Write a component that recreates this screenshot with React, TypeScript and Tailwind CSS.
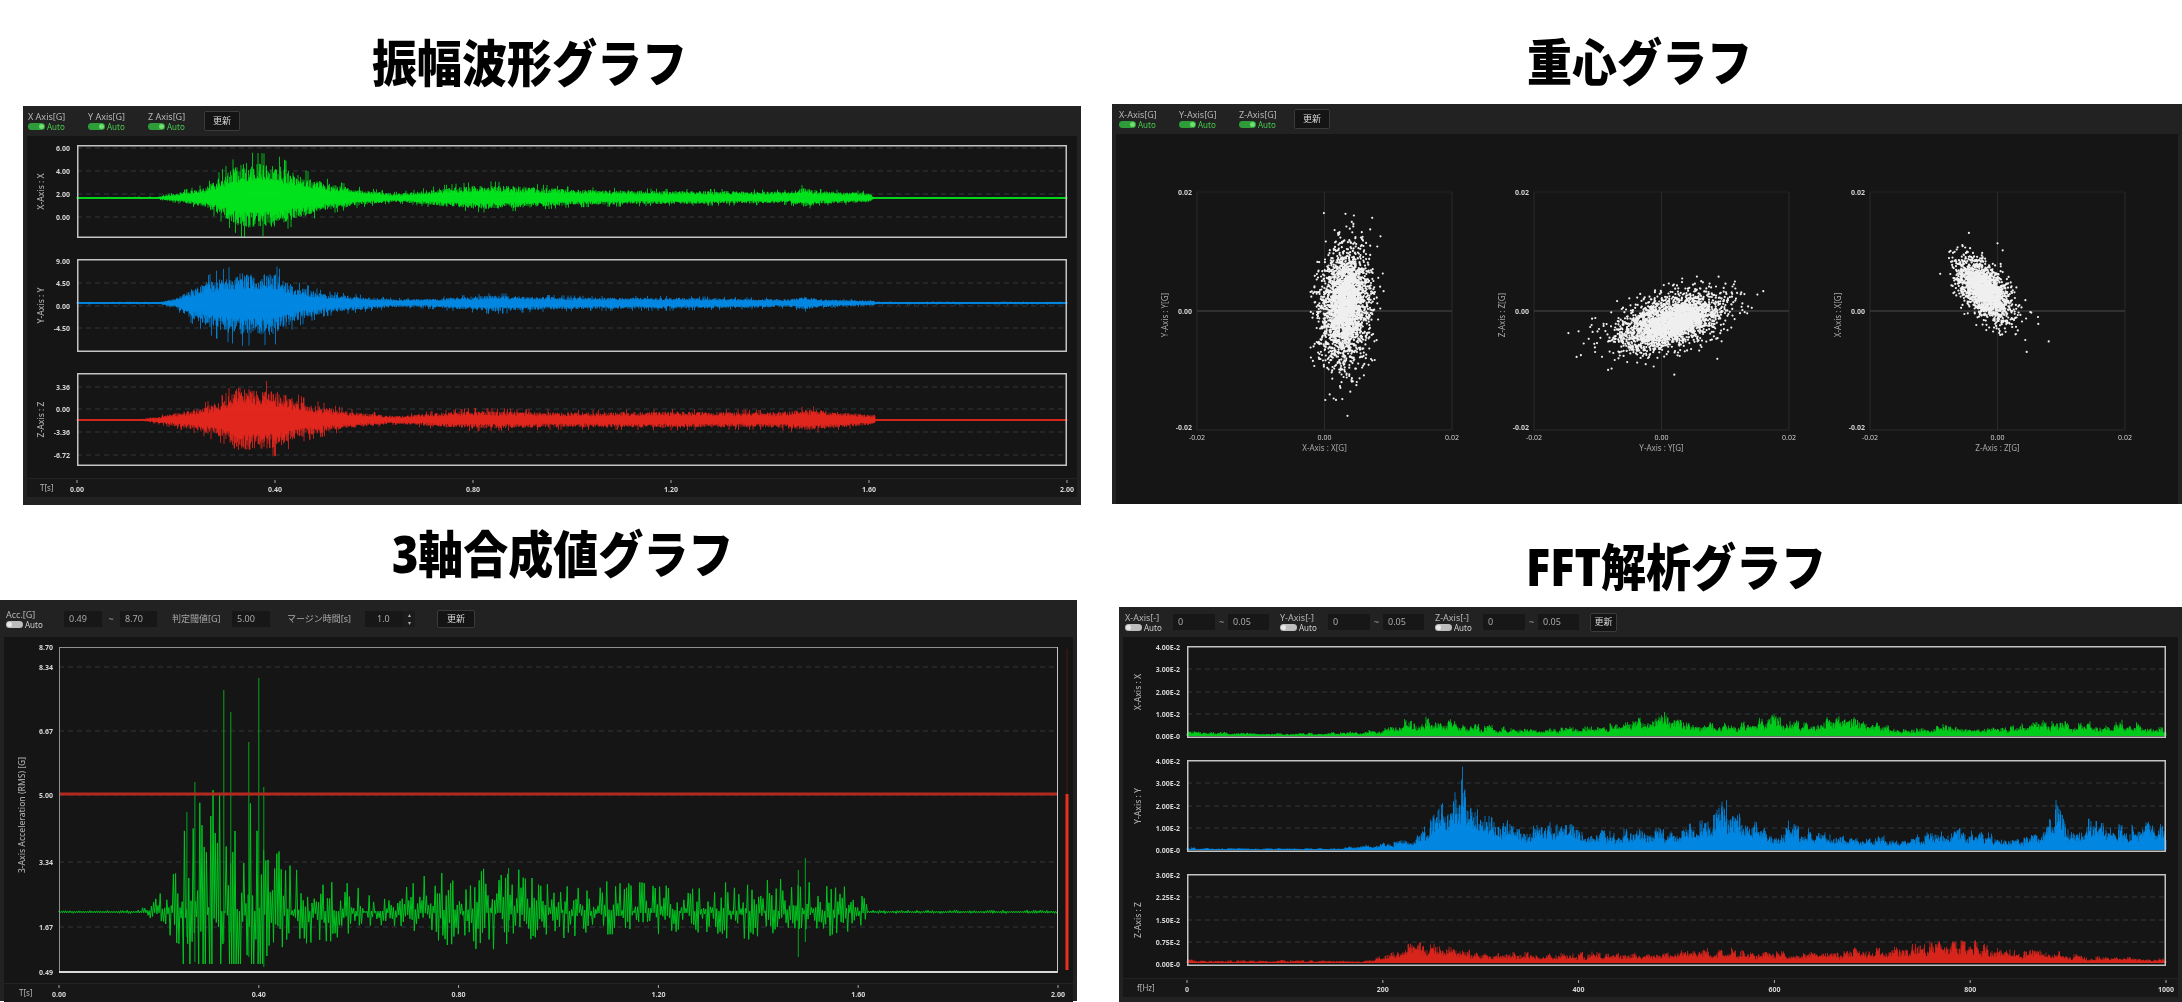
import { useMemo } from 'react';

type Kp = [number, number];
type Tick = { label: string; y: number; grid?: boolean };

const mulberry = (seed: number) => () => {
  seed = (seed + 0x6d2b79f5) | 0;
  let t = Math.imul(seed ^ (seed >>> 15), 1 | seed);
  t = (t + Math.imul(t ^ (t >>> 7), 61 | t)) ^ t;
  return ((t ^ (t >>> 14)) >>> 0) / 4294967296;
};

const env = (kps: Kp[], f: number) => {
  for (let i = 1; i < kps.length; i++) {
    if (f <= kps[i][0]) {
      const [x0, y0] = kps[i - 1];
      const [x1, y1] = kps[i];
      return y0 + ((y1 - y0) * (f - x0)) / (x1 - x0);
    }
  }
  return kps[kps.length - 1][1];
};

// symmetric vibration waveform, one short vertical stroke per half pixel
const waveBars = (seed: number, kps: Kp[], w: number, cy: number, down: number) => {
  const r = mulberry(seed);
  let d = '';
  for (let x = 0; x <= w; x += 0.5) {
    const a = env(kps, x / w);
    const k = () => (r() > 0.95 ? 1 : 0.35 + 0.42 * r());
    const up = Math.max(a * k(), 0.9);
    const dn = Math.max(a * k() * down, 0.9);
    d += `M${x.toFixed(1)} ${(cy - up).toFixed(1)}V${(cy + dn).toFixed(1)}`;
  }
  return d;
};

// fft spectrum, bars growing from the baseline
const fftBars = (seed: number, kps: Kp[], w: number, base: number) => {
  const r = mulberry(seed);
  let d = '';
  let m = 1;
  for (let x = 0, i = 0; x <= w; x += 0.5, i++) {
    if (i % 9 === 0) m = 0.5 + 0.5 * r();
    const a = env(kps, x / w);
    const h = a * m * (r() > 0.9 ? 1 : 0.45 + 0.5 * r());
    d += `M${x.toFixed(1)} ${base}V${(base - h).toFixed(1)}`;
  }
  return d;
};

const rmsLine = (seed: number, kps: Kp[], w: number, cy: number) => {
  const r = mulberry(seed);
  let d = `M0 ${cy}`;
  let s = 1;
  for (let x = 0; x <= w; x += 1.1) {
    const a = env(kps, x / w);
    const v = s > 0 ? a * Math.pow(r(), 1.5) : Math.min(a * 0.85 * Math.pow(r(), 1.5), 52);
    d += `L${x.toFixed(1)} ${(cy - s * Math.max(v, 0.8)).toFixed(1)}`;
    s = -s;
  }
  return d;
};

const scatter = (seed: number, n: number, cx: number, cy: number, sx: number, sy: number, rho: number) => {
  const r = mulberry(seed);
  const g = () => Math.sqrt(-2 * Math.log(r() + 1e-6)) * Math.cos(6.2832 * r());
  let d = '';
  for (let i = 0; i < n; i++) {
    const tail = r() < 0.12 ? 1.4 : 1;
    const a = g() * tail;
    const b = g() * tail;
    const x = cx + sx * a;
    const y = cy + sy * (rho * a + Math.sqrt(1 - rho * rho) * b);
    if (y < 8 || y > 230) continue;
    d += `M${x.toFixed(1)} ${y.toFixed(1)}h0`;
  }
  return d;
};

const Toggle = ({ on }: { on?: boolean }) => (
  <span className={`relative inline-block w-[17px] h-[7px] rounded-full ${on ? 'bg-[#2f9c3a]' : 'bg-[#bdbdbd]'}`}>
    <span className={`absolute top-[1px] w-[5px] h-[5px] rounded-full ${on ? 'right-[1px] bg-[#6fe06f]' : 'left-[1px] bg-[#e8e8e8]'}`} />
  </span>
);

const AxisGroup = ({ label, on, className }: { label: string; on?: boolean; className?: string }) => (
  <div className={`flex flex-col shrink-0 ${className ?? ''}`}>
    <span className="text-[9px] leading-[11px] text-[#b5b5b5] whitespace-nowrap">{label}</span>
    <div className="flex items-center gap-[2px]">
      <Toggle on={on} />
      <span className={`text-[8px] leading-[9px] ${on ? 'text-[#47c94c]' : 'text-[#cfcfcf]'}`}>Auto</span>
    </div>
  </div>
);

const Field = ({ value, className }: { value: string; className?: string }) => (
  <div className={`h-[16px] bg-[#171717] text-[9px] leading-[16px] text-[#a8a8a8] pl-[5px] shrink-0 ${className ?? ''}`}>{value}</div>
);

const UpdateButton = ({ className }: { className?: string }) => (
  <button className={`bg-[#141414] border border-[#3a3a3a] rounded-[2px] text-[9px] text-[#dcdcdc] shrink-0 ${className ?? ''}`}>更新</button>
);

const Title = ({ children, className }: { children: React.ReactNode; className: string }) => (
  <h2 className={`text-[45px] leading-[60px] font-black text-black whitespace-nowrap blur-[0.4px] scale-y-[1.12] ${className}`}>{children}</h2>
);

const WavePlot = ({
  width,
  left,
  plotW,
  plotH,
  ticks,
  axis,
  axisGap = 33,
  color,
  d,
}: {
  width: number;
  left: number;
  plotW: number;
  plotH: number;
  ticks: Tick[];
  axis: string;
  axisGap?: number;
  color: string;
  d: string;
}) => (
  <svg width={width} height={plotH} className="block overflow-visible shrink-0">
    <g transform={`translate(${left} 0)`}>
      {ticks.filter((t) => t.grid !== false).map((t) => (
        <line key={t.y} x1={0} x2={plotW} y1={t.y} y2={t.y} stroke="#33393d" strokeWidth={1} strokeDasharray="5 4" />
      ))}
      <path d={d} stroke={color} strokeWidth={0.7} fill="none" />
      <rect x={0.75} y={0.75} width={plotW - 1.5} height={plotH - 1.5} fill="none" stroke="#c4c4c4" strokeWidth={1.5} />
    </g>
    {ticks.map((t) => (
      <text key={t.label} x={left - 7} y={t.y + 2.5} textAnchor="end" fontSize={7} fontWeight={700} fill="#d6d6d6">
        {t.label}
      </text>
    ))}
    <text
      transform={`translate(${left - axisGap} ${plotH / 2}) rotate(-90)`}
      textAnchor="middle"
      fontSize={8.5}
      fontWeight={500}
      fill="#a8a8a8"
    >
      {axis}
    </text>
  </svg>
);

const AxisBand = ({
  left,
  plotW,
  prefix,
  labels,
  prefixX,
  width,
}: {
  left: number;
  plotW: number;
  prefix: string;
  labels: string[];
  prefixX: number;
  width: number;
}) => (
  <svg width={width} height={18} className="block bg-[#171717] mx-[4px] mt-[1px] shrink-0 overflow-visible">
    <text x={prefixX} y={12} fontSize={8} fill="#b5b5b5">{prefix}</text>
    {labels.map((l, i) => {
      const x = left + (plotW * i) / (labels.length - 1);
      return (
        <g key={l}>
          <line x1={x} x2={x} y1={1} y2={4} stroke="#aaa" />
          <text x={x} y={13} textAnchor="middle" fontSize={7} fontWeight={700} fill="#d6d6d6">{l}</text>
        </g>
      );
    })}
  </svg>
);

const ScatterPlot = ({ d, xTitle, yTitle }: { d: string; xTitle: string; yTitle: string }) => (
  <svg width={336.5} height={270} className="block shrink-0 overflow-visible">
    <g transform="translate(81 0)">
      {[0, 127.5, 255].map((x) => (
        <line key={x} x1={x} x2={x} y1={0} y2={238} stroke="#2b2b2b" />
      ))}
      <line x1={0} x2={255} y1={0} y2={0} stroke="#222" />
      <line x1={0} x2={255} y1={238} y2={238} stroke="#2b2b2b" />
      <line x1={0} x2={255} y1={119} y2={119} stroke="#3a3a3a" strokeWidth={1.5} />
      <path d={d} stroke="#efefef" strokeWidth={2.2} strokeLinecap="round" fill="none" />
      <text x={-5} y={3} textAnchor="end" fontSize={7} fontWeight={700} fill="#d0d0d0">0.02</text>
      <text x={-5} y={122} textAnchor="end" fontSize={7} fontWeight={700} fill="#d0d0d0">0.00</text>
      <text x={-5} y={238} textAnchor="end" fontSize={7} fontWeight={700} fill="#d0d0d0">-0.02</text>
      <text x={0} y={248} textAnchor="middle" fontSize={7} fill="#d0d0d0">-0.02</text>
      <text x={127.5} y={248} textAnchor="middle" fontSize={7} fill="#d0d0d0">0.00</text>
      <text x={255} y={248} textAnchor="middle" fontSize={7} fill="#d0d0d0">0.02</text>
      <text x={127.5} y={259} textAnchor="middle" fontSize={8} fill="#a8a8a8">{xTitle}</text>
      <text transform="translate(-29 123) rotate(-90)" textAnchor="middle" fontSize={8} fill="#a8a8a8">{yTitle}</text>
    </g>
  </svg>
);

const FftGroup = ({ label, className }: { label: string; className?: string }) => (
  <div className={`flex items-center ${className ?? ''}`}>
    <AxisGroup label={label} className="w-[42px]" />
    <Field value="0" className="w-[42px] ml-[6px]" />
    <span className="w-[13px] text-center text-[9px] text-[#999]">~</span>
    <Field value="0.05" className="w-[41px]" />
  </div>
);

const greenKps: Kp[] = [[0, 1], [0.08, 1.5], [0.1, 6], [0.13, 14], [0.155, 36], [0.165, 46], [0.2, 44], [0.22, 32], [0.25, 20], [0.28, 12], [0.32, 6], [0.34, 8], [0.37, 13], [0.41, 17], [0.45, 15], [0.5, 11], [0.6, 9], [0.65, 9], [0.72, 8], [0.735, 14], [0.75, 9], [0.8, 7], [0.805, 1], [1, 1]];
const blueKps: Kp[] = [[0, 1.2], [0.085, 1.4], [0.1, 6], [0.115, 18], [0.14, 32], [0.165, 39], [0.2, 38], [0.22, 22], [0.25, 12], [0.32, 5], [0.35, 5], [0.42, 10], [0.47, 8], [0.52, 7], [0.6, 7], [0.72, 5], [0.735, 8], [0.75, 5], [0.805, 3], [0.806, 1.5], [1, 1.5]];
const redKps: Kp[] = [[0, 0.9], [0.065, 1], [0.08, 4], [0.12, 14], [0.15, 26], [0.16, 43], [0.2, 38], [0.23, 22], [0.27, 12], [0.32, 5], [0.36, 9], [0.4, 12], [0.5, 10], [0.6, 11], [0.7, 10], [0.74, 14], [0.78, 9], [0.805, 7], [0.807, 0.9], [1, 0.9]];
const rmsKps: Kp[] = [[0, 1.5], [0.08, 2], [0.095, 12], [0.115, 40], [0.13, 100], [0.15, 130], [0.19, 140], [0.21, 90], [0.225, 50], [0.26, 38], [0.3, 28], [0.33, 12], [0.34, 24], [0.37, 40], [0.45, 46], [0.5, 32], [0.58, 30], [0.65, 30], [0.72, 34], [0.75, 32], [0.79, 26], [0.805, 18], [0.81, 2], [1, 2]];
const fftGreen: Kp[] = [[0, 6], [0.02, 5], [0.1, 3], [0.18, 5], [0.2, 9], [0.22, 18], [0.25, 22], [0.3, 12], [0.35, 8], [0.42, 12], [0.46, 20], [0.49, 26], [0.52, 18], [0.56, 14], [0.6, 24], [0.63, 16], [0.67, 28], [0.7, 16], [0.73, 8], [0.78, 13], [0.82, 10], [0.87, 20], [0.91, 14], [0.95, 17], [1, 10]];
const fftBlue: Kp[] = [[0, 4], [0.01, 2], [0.15, 2], [0.19, 6], [0.23, 14], [0.25, 32], [0.27, 66], [0.28, 88], [0.29, 66], [0.3, 50], [0.33, 30], [0.36, 32], [0.45, 22], [0.5, 24], [0.53, 34], [0.555, 56], [0.58, 38], [0.6, 24], [0.62, 34], [0.65, 18], [0.7, 14], [0.76, 18], [0.79, 26], [0.85, 14], [0.875, 24], [0.89, 58], [0.9, 34], [0.95, 30], [1, 32]];
const fftRed: Kp[] = [[0, 7], [0.01, 3], [0.18, 3], [0.2, 9], [0.22, 22], [0.25, 22], [0.3, 11], [0.5, 13], [0.55, 16], [0.62, 11], [0.7, 17], [0.75, 22], [0.8, 28], [0.83, 15], [0.87, 18], [0.92, 7], [1, 5]];

const spikes: [number, number, number][] = [
  [0.165, 222, 30],
  [0.172, 200, 20],
  [0.2, 234, 40],
  [0.19, 170, 45],
  [0.136, 130, 50],
  [0.128, 100, 25],
  [0.205, 125, 55],
  [0.747, 54, 30],
  [0.74, 42, 45],
  [0.45, 44, 20],
];

export default function App() {
  const data = useMemo(() => {
    const wave = [waveBars(11, greenKps, 990, 53, 0.85), waveBars(23, blueKps, 990, 44, 1.1), waveBars(37, redKps, 990, 47, 0.95)];
    const fft = [fftBars(5, fftGreen, 979, 90), fftBars(7, fftBlue, 979, 90), fftBars(9, fftRed, 979, 89)];
    const rms = rmsLine(41, rmsKps, 999, 265);
    const spikePath = spikes.map(([f, u, d]) => `M${(f * 999).toFixed(1)} ${265 - u}V${265 + d}`).join('');
    const sc = [
      scatter(3, 3000, 148, 113, 11, 26, -0.1),
      scatter(13, 3000, 137, 130, 24, 13, -0.5),
      scatter(17, 2200, 114, 98, 12, 14, 0.55),
    ];
    return { wave, fft, rms, spikePath, sc };
  }, []);

  const times = ['0.00', '0.40', '0.80', '1.20', '1.60', '2.00'];

  return (
    <div className="w-[2182px] h-[1002px] bg-white overflow-hidden grid grid-cols-[1091px_1091px] grid-rows-[510px_492px] font-['Noto_Sans','Noto_Sans_CJK_JP',sans-serif]">
      {/* 振幅波形 */}
      <section>
        <div className="h-[106px] pt-[33px] pl-[372px]">
          <Title className="w-fit">振幅波形グラフ</Title>
        </div>
        <div className="ml-[23px] w-[1058px] h-[399px] bg-[#222] flex flex-col blur-[0.5px]">
          <div className="h-[30px] flex items-center pl-[5px] gap-[18px] shrink-0">
            <AxisGroup label="X Axis[G]" on className="w-[42px]" />
            <AxisGroup label="Y Axis[G]" on className="w-[42px]" />
            <AxisGroup label="Z Axis[G]" on className="w-[42px]" />
            <UpdateButton className="w-[36px] h-[20px] -ml-[4px]" />
          </div>
          <div className="h-[342px] mx-[4px] bg-[#151515] pt-[9px] flex flex-col gap-[21px] shrink-0">
            <WavePlot width={1050} left={50} plotW={990} plotH={93} axis="X-Axis : X" color="#00ff1e" d={data.wave[0]}
              ticks={[{ label: '6.00', y: 3 }, { label: '4.00', y: 26 }, { label: '2.00', y: 49 }, { label: '0.00', y: 72 }]} />
            <WavePlot width={1050} left={50} plotW={990} plotH={93} axis="Y-Axis : Y" color="#0099ff" d={data.wave[1]}
              ticks={[{ label: '9.00', y: 2, grid: false }, { label: '4.50', y: 24 }, { label: '0.00', y: 47 }, { label: '-4.50', y: 69 }]} />
            <WavePlot width={1050} left={50} plotW={990} plotH={93} axis="Z-Axis : Z" color="#ff2a1f" d={data.wave[2]}
              ticks={[{ label: '3.36', y: 14 }, { label: '0.00', y: 36 }, { label: '-3.36', y: 59 }, { label: '-6.72', y: 82 }]} />
          </div>
          <AxisBand width={1050} left={50} plotW={990} prefix="T[s]" prefixX={13} labels={times} />
        </div>
      </section>

      {/* 重心 */}
      <section>
        <div className="h-[104px] pt-[32px] pl-[436px]">
          <Title className="w-fit">重心グラフ</Title>
        </div>
        <div className="ml-[21px] w-[1070px] h-[400px] bg-[#222] flex flex-col blur-[0.5px]">
          <div className="h-[30px] flex items-center pl-[7px] gap-[18px] shrink-0">
            <AxisGroup label="X-Axis[G]" on className="w-[42px]" />
            <AxisGroup label="Y-Axis[G]" on className="w-[42px]" />
            <AxisGroup label="Z-Axis[G]" on className="w-[42px]" />
            <UpdateButton className="w-[36px] h-[20px] -ml-[5px]" />
          </div>
          <div className="flex-1 mx-[4px] bg-[#151515] pt-[58px] flex">
            <ScatterPlot d={data.sc[0]} xTitle="X-Axis : X[G]" yTitle="Y-Axis : Y[G]" />
            <ScatterPlot d={data.sc[1]} xTitle="Y-Axis : Y[G]" yTitle="Z-Axis : Z[G]" />
            <ScatterPlot d={data.sc[2]} xTitle="Z-Axis : Z[G]" yTitle="X-Axis : X[G]" />
          </div>
        </div>
      </section>

      {/* 3軸合成値 */}
      <section>
        <div className="h-[90px] pt-[14px] pl-[392px]">
          <Title className="w-fit">3軸合成値グラフ</Title>
        </div>
        <div className="w-[1077px] h-[401px] bg-[#222] flex flex-col blur-[0.5px]">
          <div className="h-[37px] flex items-center pl-[6px] shrink-0">
            <AxisGroup label="Acc.[G]" className="w-[41px]" />
            <Field value="0.49" className="w-[38px] ml-[17px]" />
            <span className="w-[18px] text-center text-[9px] text-[#999]">~</span>
            <Field value="8.70" className="w-[37px]" />
            <span className="ml-[15px] w-[50px] text-[9px] text-[#a8a8a8] whitespace-nowrap">判定閾値[G]</span>
            <Field value="5.00" className="w-[38px] ml-[10px]" />
            <span className="ml-[17px] w-[66px] text-[9px] text-[#a8a8a8] whitespace-nowrap">マージン時間[s]</span>
            <Field value="1.0" className="w-[38px] ml-[12px] pl-[12px]" />
            <div className="w-[12px] h-[16px] bg-[#1b1b1b] text-[6px] leading-[8px] text-center text-[#aaa] shrink-0">
              <div>▴</div>
              <div>▾</div>
            </div>
            <UpdateButton className="w-[38px] h-[18px] ml-[22px]" />
          </div>
          <div className="h-[346px] mx-[4px] bg-[#151515] pt-[10px] shrink-0">
            <svg width={1069} height={326} className="block overflow-visible">
              <g transform="translate(55 0)">
                {[20, 84, 148, 215, 280].map((y) => (
                  <line key={y} x1={0} x2={999} y1={y} y2={y} stroke="#33393d" strokeDasharray="5 4" />
                ))}
                <path d={data.rms} stroke="#00c420" strokeWidth={1} fill="none" />
                <path d={data.spikePath} stroke="#00a81c" strokeWidth={1} fill="none" />
                <line x1={1} x2={999} y1={147} y2={147} stroke="#b3291f" strokeWidth={3} />
                <rect x={0.5} y={0.5} width={998} height={324.5} fill="none" stroke="#8f8f8f" />
                <line x1={0} x2={999} y1={325} y2={325} stroke="#d8d8d8" strokeWidth={2} />
                <line x1={998.5} x2={998.5} y1={0} y2={326} stroke="#c4c4c4" />
                <line x1={1008} x2={1008} y1={2} y2={147} stroke="#4d1a15" />
                <line x1={1008} x2={1008} y1={147} y2={323} stroke="#e8301f" strokeWidth={3} />
              </g>
              {[['8.70', 0], ['8.34', 20], ['6.67', 84], ['5.00', 148], ['3.34', 215], ['1.67', 280], ['0.49', 325]].map(([l, y]) => (
                <text key={l} x={49} y={Number(y) + 2.5} textAnchor="end" fontSize={7} fontWeight={700} fill="#d6d6d6">{l}</text>
              ))}
              <text transform="translate(21 168) rotate(-90)" textAnchor="middle" fontSize={8.5} fontWeight={500} fill="#a8a8a8">3-Axis Acceleration (RMS) [G]</text>
            </svg>
          </div>
          <AxisBand width={1069} left={55} plotW={999} prefix="T[s]" prefixX={15} labels={times} />
        </div>
      </section>

      {/* FFT */}
      <section>
        <div className="h-[97px] pt-[27px] pl-[435px]">
          <Title className="w-fit">FFT解析グラフ</Title>
        </div>
        <div className="ml-[28px] w-[1063px] h-[395px] bg-[#222] flex flex-col blur-[0.5px]">
          <div className="h-[30px] flex items-center pl-[6px] shrink-0">
            <FftGroup label="X-Axis[-]" />
            <FftGroup label="Y-Axis[-]" className="ml-[11px]" />
            <FftGroup label="Z-Axis[-]" className="ml-[11px]" />
            <UpdateButton className="w-[27px] h-[19px] ml-[11px]" />
          </div>
          <div className="h-[341px] mx-[4px] bg-[#151515] pt-[9px] flex flex-col gap-[22px] shrink-0">
            <WavePlot width={1055} left={64} plotW={979} plotH={92} axis="X-Axis : X" axisGap={46} color="#00e81e" d={data.fft[0]}
              ticks={[{ label: '4.00E-2', y: 1, grid: false }, { label: '3.00E-2', y: 23 }, { label: '2.00E-2', y: 46 }, { label: '1.00E-2', y: 68 }, { label: '0.00E-0', y: 90, grid: false }]} />
            <WavePlot width={1055} left={64} plotW={979} plotH={92} axis="Y-Axis : Y" axisGap={46} color="#0099ff" d={data.fft[1]}
              ticks={[{ label: '4.00E-2', y: 1, grid: false }, { label: '3.00E-2', y: 23 }, { label: '2.00E-2', y: 46 }, { label: '1.00E-2', y: 68 }, { label: '0.00E-0', y: 90, grid: false }]} />
            <WavePlot width={1055} left={64} plotW={979} plotH={92} axis="Z-Axis : Z" axisGap={46} color="#f5281e" d={data.fft[2]}
              ticks={[{ label: '3.00E-2', y: 1, grid: false }, { label: '2.25E-2', y: 23 }, { label: '1.50E-2', y: 46 }, { label: '0.75E-2', y: 68 }, { label: '0.00E-0', y: 90, grid: false }]} />
          </div>
          <AxisBand width={1055} left={64} plotW={979} prefix="f[Hz]" prefixX={14} labels={['0', '200', '400', '600', '800', '1000']} />
        </div>
      </section>
    </div>
  );
}
